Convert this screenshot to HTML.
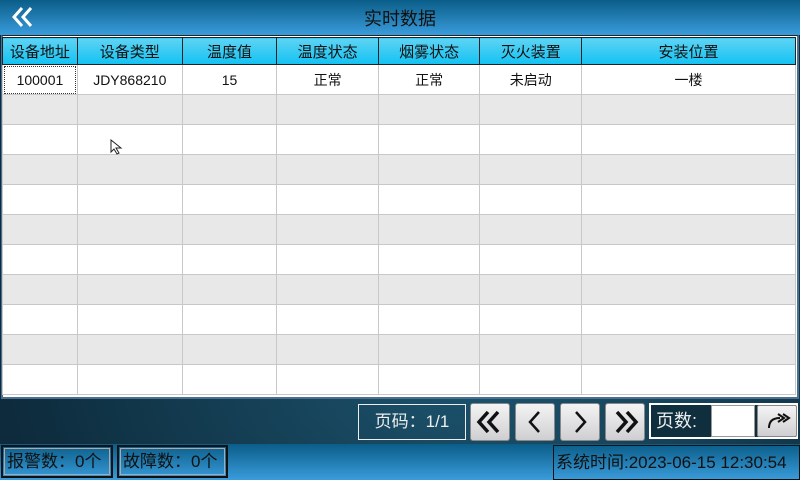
<!DOCTYPE html>
<html><head><meta charset="utf-8"><style>
*{margin:0;padding:0;box-sizing:border-box}
body{width:800px;height:480px;position:relative;overflow:hidden;font-family:"Liberation Sans","Noto Sans CJK SC",sans-serif;background:#0e2a3a}
.hdr{position:absolute;left:0;top:0;width:800px;height:35px;background:linear-gradient(#0a5d88,#3a9cdc)}
.title{position:absolute;left:0;width:800px;top:5px;text-align:center;font-size:18px;color:#111}
.mid{position:absolute;left:0;top:35px;width:800px;height:409px;background:radial-gradient(ellipse at 60% 80%,#1d5570,#0d2b3c 70%)}
.tbl{position:absolute;left:1px;top:35px;width:798px;height:364px;background:#fff;border:2px solid #4a6f90;border-top:1px solid #222}
table{border-collapse:collapse;table-layout:fixed;position:absolute;left:-1px;top:1px}
td,th{border:1px solid #c8c8c8;text-align:center;font-size:14px;font-weight:normal;color:#111;height:30px;padding:0}
th{background:linear-gradient(#5fd3f3,#12c2f3);border-color:#222;height:27px;font-size:15px}
tr:nth-child(odd) td{background:#e8e8e8}
.btm{position:absolute;left:0;top:444px;width:800px;height:36px;background:linear-gradient(#0a5d88,#3a9cdc)}
.cnt{position:absolute;top:445px;height:33px;border:2px solid #111;outline:1px solid #aaa;outline-offset:-4px;font-size:17px;color:#111;line-height:29px;padding-left:4px}
.btn{position:absolute;top:403px;width:40px;height:38px;background:linear-gradient(#f4f4f4,#cfcfd3);border-radius:3px;border:1px solid #888}
</style></head><body>
<div class="hdr"></div>
<svg style="position:absolute;left:10px;top:6px" width="26" height="22"><path d="M12 2 L4 11 L12 20 M21 2 L13 11 L21 20" stroke="#fff" stroke-width="3" fill="none"/></svg>
<div class="title">实时数据</div>
<div class="mid"></div>
<div class="tbl">
<table>
<colgroup><col style="width:75px"><col style="width:105px"><col style="width:95px"><col style="width:102px"><col style="width:102px"><col style="width:102px"><col style="width:215px"></colgroup>
<tr><th>设备地址</th><th>设备类型</th><th>温度值</th><th>温度状态</th><th>烟雾状态</th><th>灭火装置</th><th>安装位置</th></tr>
<tr><td style="outline:1px dotted #333;outline-offset:-2px">100001</td><td>JDY868210</td><td>15</td><td>正常</td><td>正常</td><td>未启动</td><td>一楼</td></tr>
<tr><td></td><td></td><td></td><td></td><td></td><td></td><td></td></tr>
<tr><td></td><td></td><td></td><td></td><td></td><td></td><td></td></tr>
<tr><td></td><td></td><td></td><td></td><td></td><td></td><td></td></tr>
<tr><td></td><td></td><td></td><td></td><td></td><td></td><td></td></tr>
<tr><td></td><td></td><td></td><td></td><td></td><td></td><td></td></tr>
<tr><td></td><td></td><td></td><td></td><td></td><td></td><td></td></tr>
<tr><td></td><td></td><td></td><td></td><td></td><td></td><td></td></tr>
<tr><td></td><td></td><td></td><td></td><td></td><td></td><td></td></tr>
<tr><td></td><td></td><td></td><td></td><td></td><td></td><td></td></tr>
<tr><td></td><td></td><td></td><td></td><td></td><td></td><td></td></tr>
</table>
</div>
<svg style="position:absolute;left:110px;top:139px" width="18" height="18"><path d="M1 1 L1 13 L4 10 L7 15 L9 14 L6 9 L11 9 Z" fill="#fff" stroke="#222" stroke-width="1"/></svg>
<div style="position:absolute;left:358px;top:404px;width:108px;height:36px;border:1px solid #eee;color:#eee;font-size:17px;line-height:34px;text-align:center">页码：1/1</div>
<div class="btn" style="left:470px"><svg width="38" height="36"><path d="M17 8 L8 18 L17 28 M27 8 L18 18 L27 28" stroke="#111" stroke-width="3.5" fill="none"/></svg></div>
<div class="btn" style="left:515px"><svg width="38" height="36"><path d="M23 8 L14 18 L23 28" stroke="#111" stroke-width="2.5" fill="none"/></svg></div>
<div class="btn" style="left:560px"><svg width="38" height="36"><path d="M15 8 L24 18 L15 28" stroke="#111" stroke-width="2.5" fill="none"/></svg></div>
<div class="btn" style="left:605px"><svg width="38" height="36"><path d="M11 8 L20 18 L11 28 M21 8 L30 18 L21 28" stroke="#111" stroke-width="3.5" fill="none"/></svg></div>
<div style="position:absolute;left:649px;top:403px;width:149px;height:36px;border:2px solid #fff;background:#0f2f3e"></div>
<div style="position:absolute;left:656px;top:405px;color:#eee;font-size:18px;line-height:32px">页数:</div>
<div style="position:absolute;left:711px;top:405px;width:44px;height:32px;background:#fff;border:1px solid #999"></div>
<div class="btn" style="left:757px;top:405px;height:32px;border-radius:2px"><svg width="38" height="30"><path d="M11 22 Q11 12 22 12" stroke="#111" stroke-width="2" fill="none"/><path d="M20 8 L26 12 L20 16 M25 8 L31 12 L25 16" stroke="#111" stroke-width="2" fill="none"/></svg></div>
<div class="btm"></div>
<div class="cnt" style="left:1px;width:112px">报警数：0个</div>
<div class="cnt" style="left:117px;width:111px">故障数：0个</div>
<div style="position:absolute;left:553px;top:445px;width:247px;height:35px;border:1px solid #111;font-size:17px;color:#111;line-height:34px;padding-left:2px">系统时间:2023-06-15 12:30:54</div>
</body></html>
